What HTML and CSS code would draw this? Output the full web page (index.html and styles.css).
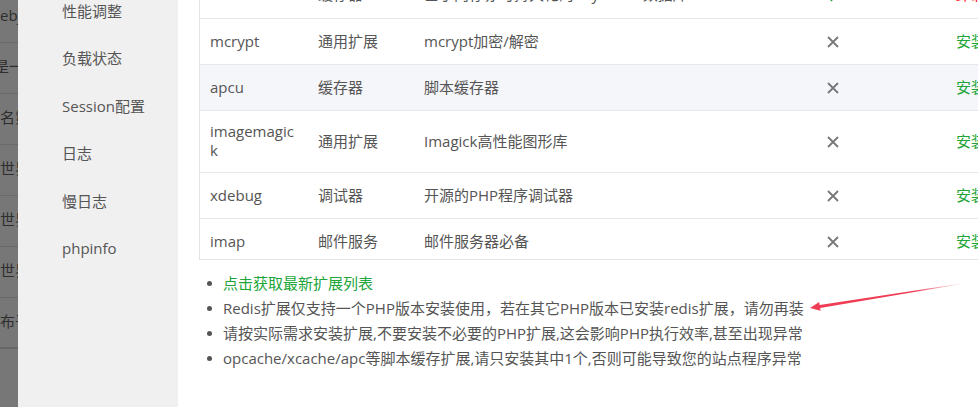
FILE: index.html
```html
<!DOCTYPE html>
<html lang="zh-CN">
<head>
<meta charset="utf-8">
<title>PHP 扩展管理</title>
<link rel="stylesheet" href="styles.css">
</head>
<body>
<div class="shade">
  <div class="shade-list">
    <div class="shade-row">ebj</div>
    <div class="shade-row shade-row--shift">是一</div>
    <div class="shade-row">名第</div>
    <div class="shade-row">世界</div>
    <div class="shade-row">世界</div>
    <div class="shade-row">世界</div>
    <div class="shade-row shade-row--last">布于</div>
  </div>
</div>
<nav class="sidebar">
  <ul class="menu">
    <li class="menu-item">性能调整</li>
    <li class="menu-item">负载状态</li>
    <li class="menu-item">Session配置</li>
    <li class="menu-item">日志</li>
    <li class="menu-item">慢日志</li>
    <li class="menu-item">phpinfo</li>
  </ul>
</nav>
<main class="main">
  <div class="table-wrap">
    <table class="ext-table">
      <colgroup>
        <col class="c-name"><col class="c-type"><col class="c-desc"><col class="c-status"><col class="c-op">
      </colgroup>
      <tbody>
        <tr>
          <td>redis</td><td>缓存器</td><td>基于内存亦可持久化的Key-Value数据库</td>
          <td class="status"><svg class="ico" viewBox="0 0 12 12"><path d="M1 6.5 L4.5 10 L11 2" fill="none" stroke="#20a53a" stroke-width="2"/></svg></td>
          <td class="op"><span class="op-red">卸载</span></td>
        </tr>
        <tr>
          <td>mcrypt</td><td>通用扩展</td><td>mcrypt加密/解密</td>
          <td class="status"><svg class="ico" viewBox="0 0 12 12"><path d="M1 1 L11 11 M11 1 L1 11" stroke="#777" stroke-width="1.8"/></svg></td>
          <td class="op"><span class="op-green">安装</span></td>
        </tr>
        <tr class="is-hover">
          <td>apcu</td><td>缓存器</td><td>脚本缓存器</td>
          <td class="status"><svg class="ico" viewBox="0 0 12 12"><path d="M1 1 L11 11 M11 1 L1 11" stroke="#777" stroke-width="1.8"/></svg></td>
          <td class="op"><span class="op-green">安装</span></td>
        </tr>
        <tr>
          <td class="wrap">imagemagick</td><td>通用扩展</td><td>Imagick高性能图形库</td>
          <td class="status"><svg class="ico" viewBox="0 0 12 12"><path d="M1 1 L11 11 M11 1 L1 11" stroke="#777" stroke-width="1.8"/></svg></td>
          <td class="op"><span class="op-green">安装</span></td>
        </tr>
        <tr>
          <td>xdebug</td><td>调试器</td><td>开源的PHP程序调试器</td>
          <td class="status"><svg class="ico" viewBox="0 0 12 12"><path d="M1 1 L11 11 M11 1 L1 11" stroke="#777" stroke-width="1.8"/></svg></td>
          <td class="op"><span class="op-green">安装</span></td>
        </tr>
        <tr>
          <td>imap</td><td>邮件服务</td><td>邮件服务器必备</td>
          <td class="status"><svg class="ico" viewBox="0 0 12 12"><path d="M1 1 L11 11 M11 1 L1 11" stroke="#777" stroke-width="1.8"/></svg></td>
          <td class="op"><span class="op-green">安装</span></td>
        </tr>
      </tbody>
    </table>
  </div>
  <ul class="tips">
    <li class="tip tip--link">点击获取最新扩展列表</li>
    <li class="tip">Redis扩展仅支持一个PHP版本安装使用，若在其它PHP版本已安装redis扩展，请勿再装</li>
    <li class="tip">请按实际需求安装扩展,不要安装不必要的PHP扩展,这会影响PHP执行效率,甚至出现异常</li>
    <li class="tip">opcache/xcache/apc等脚本缓存扩展,请只安装其中1个,否则可能导致您的站点程序异常</li>
  </ul>
  <svg class="arrow" viewBox="0 0 160 37" width="160" height="37">
    <defs>
      <linearGradient id="fade" x1="0" y1="0" x2="1" y2="0">
        <stop offset="0" stop-color="#f03c55"/>
        <stop offset="0.7" stop-color="#f03c55"/>
        <stop offset="1" stop-color="#f03c55" stop-opacity="0.1"/>
      </linearGradient>
    </defs>
    <polygon fill="url(#fade)" points="5,30 14.16,23.98 14.6,26.9 154.95,5.7 155.05,6.3 15.1,29.9 15.58,32.86"/>
  </svg>
</main>
</body>
</html>
```
FILE: styles.css
```css
* { box-sizing: border-box; }
html, body { margin: 0; padding: 0; }
body {
  width: 978px;
  height: 407px;
  overflow: hidden;
  display: flex;
  font-family: "Open Sans", "Noto Sans CJK SC", sans-serif;
  font-size: 15px;
  color: #555;
  background: #fff;
}

.shade {
  width: 18px;
  flex: none;
  background: #777;
  overflow: hidden;
}
.shade-list { margin-top: -8px; width: 60px; }
.shade-row {
  height: 51px;
  border-bottom: 1px solid #6a6a6a;
  line-height: 46px;
  color: #2e2e2e;
  white-space: nowrap;
}
.shade-row--shift { text-indent: -6px; }
.shade-row--last { border-bottom: 2px solid #666; }

.sidebar {
  width: 160px;
  flex: none;
  background: #f0f0f0;
  overflow: hidden;
}
.menu { list-style: none; margin: -12px 0 0; padding: 0 0 0 44px; }
.menu-item {
  height: 47.4px;
  line-height: 47.4px;
  color: #555;
  white-space: nowrap;
}

.main {
  flex: 1;
  position: relative;
  padding-left: 21px;
  overflow: hidden;
}
.table-wrap {
  height: 260px;
  width: 900px;
  border-left: 1px solid #e4e4e4;
  border-bottom: 1px solid #e4e4e4;
  overflow: hidden;
}
.ext-table {
  margin-top: -28px;
  border-collapse: collapse;
  table-layout: fixed;
  width: 899px;
}
.c-name { width: 108px; }
.c-type { width: 106px; }
.c-desc { width: 366px; }
.c-status { width: 106px; }
.c-op { width: 213px; }
.ext-table td {
  height: 46px;
  padding: 0 10px;
  line-height: 19px;
  border-bottom: 1px solid #e7e8ec;
  vertical-align: middle;
  white-space: nowrap;
}
.ext-table td.wrap {
  white-space: normal;
  word-break: break-all;
  height: 62px;
}
.ext-table tr.is-hover td { background: #f5f6fa; }
.ext-table td.status { text-align: center; }
.ext-table td.op { padding-left: 70px; }
.ico { width: 12px; height: 12px; display: inline-block; vertical-align: middle; }
.op-green { color: #20a53a; }
.op-red { color: #f00; }

.tips {
  margin: 11px 0 0;
  padding: 0 0 0 24px;
  list-style: none;
}
.tip {
  position: relative;
  line-height: 25px;
  white-space: nowrap;
  color: #555;
}
.tip::before {
  content: "";
  position: absolute;
  left: -16px;
  top: 10px;
  width: 5px;
  height: 5px;
  border-radius: 50%;
  background: #555;
}
.tip--link { color: #20a53a; }

.arrow {
  position: absolute;
  left: 627px;
  top: 278px;
}
```
